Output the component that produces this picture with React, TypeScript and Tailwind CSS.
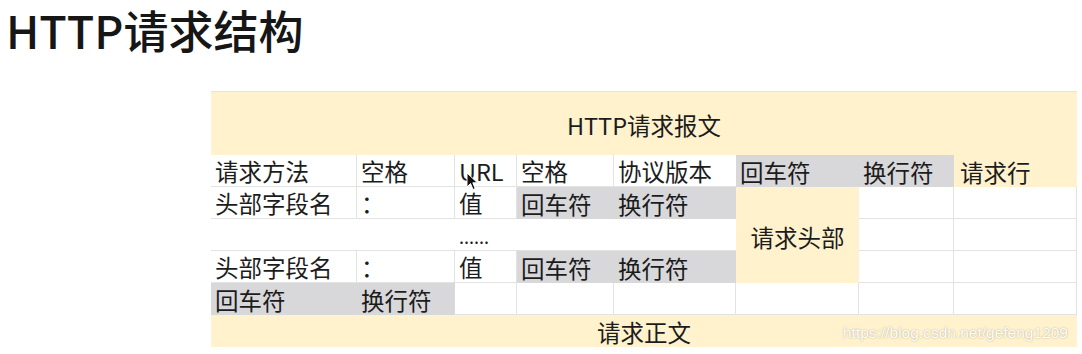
import type { ReactNode } from 'react'

type Tone = 'white' | 'gray' | 'yellow' | 'plain'

const toneClass: Record<Tone, string> = {
  white: 'bg-white border-r border-b border-[#e3e3e3]',
  plain: 'bg-white border-b border-[#e3e3e3]',
  gray: 'bg-[#d8d8db]',
  yellow: 'bg-[#fff2cc]',
}

function Cell({ tone = 'white', children, className = '' }: { tone?: Tone; children?: ReactNode; className?: string }) {
  return (
    <div className={`flex items-center pl-[4px] pt-[3px] whitespace-nowrap ${toneClass[tone]} ${className}`}>
      {children}
    </div>
  )
}

function Cursor() {
  return (
    <svg className="absolute left-[466px] top-[172px]" width="13" height="19" viewBox="0 0 13 19">
      <path d="M1 1 L1 15 L4.5 11.5 L7 17.5 L9.2 16.5 L6.8 10.8 L11.5 10.8 Z" fill="#111" stroke="#fff" strokeWidth="1" strokeLinejoin="round" />
    </svg>
  )
}

export default function App() {
  return (
    <div className="relative w-[1082px] h-[354px] bg-white font-['Noto_Sans_CJK_SC','Noto_Sans',sans-serif] text-[#1c1c1c]">
      <h1 className="pl-[6px] text-[45px] leading-[60px] font-medium text-[#161616] whitespace-nowrap">HTTP请求结构</h1>

      <div className="mt-[31px] ml-[211px] grid w-[866px] grid-cols-[146px_98px_62px_97px_122px_123px_95px_123px] grid-rows-[64px_repeat(6,32px)] text-[23.5px] leading-none">
        <div className="col-span-8 flex items-center justify-center border-t border-[#ebe3cf] bg-[#fff2cc] pt-[5px]">HTTP请求报文</div>

        <Cell>请求方法</Cell>
        <Cell>空格</Cell>
        <Cell>URL</Cell>
        <Cell>空格</Cell>
        <Cell className="border-r-0">协议版本</Cell>
        <Cell tone="gray">回车符</Cell>
        <Cell tone="gray">换行符</Cell>
        <Cell tone="yellow" className="pl-[6px]">请求行</Cell>

        <Cell>头部字段名</Cell>
        <Cell>：</Cell>
        <Cell>值</Cell>
        <Cell tone="gray">回车符</Cell>
        <Cell tone="gray">换行符</Cell>
        <div className="row-span-3 flex items-center justify-center bg-[#fff2cc] pt-[6px]">请求头部</div>
        <Cell />
        <Cell />

        <Cell tone="plain" />
        <Cell tone="plain" />
        <Cell tone="plain" className="text-[18px]">......</Cell>
        <Cell tone="plain" />
        <Cell tone="plain" />
        <Cell />
        <Cell />

        <Cell>头部字段名</Cell>
        <Cell>：</Cell>
        <Cell>值</Cell>
        <Cell tone="gray">回车符</Cell>
        <Cell tone="gray">换行符</Cell>
        <Cell />
        <Cell />

        <Cell tone="gray">回车符</Cell>
        <Cell tone="gray">换行符</Cell>
        <Cell />
        <Cell />
        <Cell />
        <Cell />
        <Cell />
        <Cell />

        <div className="col-span-8 flex items-center justify-center bg-[#fff2cc] pt-[3px]">请求正文</div>
      </div>

      <Cursor />

      <div className="absolute left-[843px] top-[323px] whitespace-nowrap font-['Liberation_Sans',sans-serif] text-[15.5px] leading-[20px] text-white [text-shadow:0_0_1.5px_rgba(90,80,60,0.55)]">
        https://blog.csdn.net/gefeng1209
      </div>
    </div>
  )
}
